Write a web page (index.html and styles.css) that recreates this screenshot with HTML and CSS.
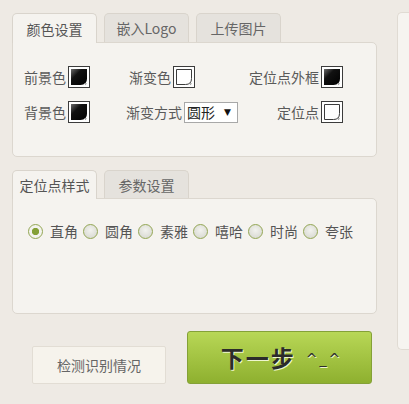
FILE: index.html
```html
<!DOCTYPE html>
<html lang="zh">
<head>
<meta charset="utf-8">
<link rel="stylesheet" href="styles.css">
</head>
<body>
<svg class="defs" width="0" height="0" aria-hidden="true">
  <defs>
    <linearGradient id="swg" x1="0" y1="0" x2="1" y2="1">
      <stop offset="0" stop-color="#6a6a6a"/>
      <stop offset="0.35" stop-color="#111"/>
      <stop offset="1" stop-color="#000"/>
    </linearGradient>
    <symbol id="sw-dark" viewBox="0 0 22 22">
      <rect x="0.5" y="0.5" width="21" height="21" fill="#fff" stroke="#3c3c3c"/>
      <path d="M3 3H19V12.5Q19 19 12.5 19H3Z" fill="url(#swg)"/>
      <path d="M16 17.2h3l-1.5 2z" fill="#9a9a9a"/>
    </symbol>
    <symbol id="sw-light" viewBox="0 0 22 22">
      <rect x="0.5" y="0.5" width="21" height="21" fill="#fff" stroke="#3c3c3c"/>
      <path d="M3.5 3.5H18.5V12.5Q18.5 18.5 12.5 18.5H3.5Z" fill="#fff" stroke="#3c3c3c"/>
      <path d="M16 17.2h3l-1.5 2z" fill="#9a9a9a"/>
    </symbol>
  </defs>
</svg>
<div class="page">
  <div class="main">
    <div class="tabs">
      <div class="tab active">颜色设置</div>
      <div class="tab">嵌入Logo</div>
      <div class="tab">上传图片</div>
    </div>
    <div class="panel panel-color">
      <div class="fields">
        <div class="field"><span>前景色</span><svg class="swatch"><use href="#sw-dark"/></svg></div>
        <div class="field shift"><span>渐变色</span><svg class="swatch"><use href="#sw-light"/></svg></div>
        <div class="field end"><span>定位点外框</span><svg class="swatch"><use href="#sw-dark"/></svg></div>
        <div class="field"><span>背景色</span><svg class="swatch"><use href="#sw-dark"/></svg></div>
        <div class="field"><span>渐变方式</span><div class="select"><span>圆形</span><span class="arrow">▼</span></div></div>
        <div class="field end"><span>定位点</span><svg class="swatch"><use href="#sw-light"/></svg></div>
      </div>
    </div>

    <div class="tabs tabs-second">
      <div class="tab active">定位点样式</div>
      <div class="tab">参数设置</div>
    </div>
    <div class="panel panel-style">
      <div class="radios">
        <label class="opt"><span class="radio checked"></span><span>直角</span></label>
        <label class="opt"><span class="radio"></span><span>圆角</span></label>
        <label class="opt"><span class="radio"></span><span>素雅</span></label>
        <label class="opt"><span class="radio"></span><span>嘻哈</span></label>
        <label class="opt"><span class="radio"></span><span>时尚</span></label>
        <label class="opt"><span class="radio"></span><span>夸张</span></label>
      </div>
    </div>

    <div class="actions">
      <div class="btn btn-check">检测识别情况</div>
      <div class="btn btn-next"><span class="big">下一步</span><span class="smile">^_^</span></div>
    </div>
  </div>
  <aside class="side"></aside>
</div>
</body>
</html>
```
FILE: styles.css
```css
html, body {
  margin: 0;
  padding: 0;
}
body {
  background: #eeeae4;
  font-family: "Noto Sans CJK SC", "Noto Sans", sans-serif;
  font-size: 14px;
  color: #5a5a5a;
  width: 409px;
  height: 404px;
  overflow: hidden;
}
.defs {
  position: absolute;
  width: 0;
  height: 0;
}
.page {
  display: flex;
  padding: 12px 0 0 12px;
  gap: 20px;
}
.main {
  width: 365px;
  flex: none;
  display: flex;
  flex-direction: column;
}
.tabs {
  display: flex;
  gap: 7px;
  margin-top: 1px;
  height: 29px;
  position: relative;
  z-index: 1;
}
.tabs-second {
  margin-top: 13px;
  height: 28px;
}
.tab {
  width: 85px;
  box-sizing: border-box;
  height: 29px;
  border: 1px solid #d9d4cc;
  border-bottom: none;
  border-radius: 5px 5px 0 0;
  background: #e5e2dd;
  color: #666;
  display: flex;
  align-items: center;
  justify-content: center;
  line-height: 1;
}
.tabs-second .tab {
  height: 28px;
}
.tab.active {
  background: #f5f3ef;
  color: #555;
  height: 30px;
}
.tabs-second .tab.active {
  height: 29px;
}
.panel {
  background: #f5f3ef;
  border: 1px solid #dcd7cf;
  border-radius: 0 5px 5px 5px;
  box-sizing: border-box;
}
.panel-color {
  height: 115px;
  padding: 23px 33px 0 11px;
}
.fields {
  display: grid;
  grid-template-columns: 102px 1fr auto;
  row-gap: 13px;
  align-items: center;
}
.field {
  display: flex;
  align-items: center;
  gap: 2px;
  line-height: 22px;
  height: 22px;
}
.field.shift {
  margin-left: 3px;
}
.field.end {
  justify-self: end;
}
.swatch {
  width: 22px;
  height: 22px;
  display: block;
}
.select {
  width: 54px;
  height: 21px;
  box-sizing: border-box;
  border: 1px solid #a8a8a8;
  background: #fff;
  color: #222;
  display: flex;
  align-items: center;
  justify-content: space-between;
  padding: 0 6px 0 2px;
  line-height: 19px;
}
.select .arrow {
  font-size: 9px;
  color: #111;
  font-family: "DejaVu Sans", sans-serif;
}
.panel-style {
  height: 116px;
  padding: 25px 0 0 15px;
}
.radios {
  display: flex;
  gap: 5px;
}
.opt {
  display: flex;
  align-items: center;
  gap: 7px;
  height: 15px;
  line-height: 15px;
  color: #555;
}
.radio {
  width: 15px;
  height: 15px;
  box-sizing: border-box;
  border-radius: 50%;
  border: 1.5px solid #93a653;
  background: radial-gradient(circle at 50% 40%, #f2f2ee 0, #dcddd6 70%);
  flex: none;
}
.radio.checked {
  background: radial-gradient(circle, #84a036 0, #84a036 3.3px, #f3f3ee 4px);
}
.actions {
  display: flex;
  align-items: flex-end;
  gap: 21px;
  padding-left: 20px;
  margin-top: 17px;
}
.btn {
  box-sizing: border-box;
  display: flex;
  align-items: center;
  justify-content: center;
}
.btn-check {
  width: 134px;
  height: 38px;
  background: #f6f3ec;
  border: 1px solid #e2ddd4;
  border-radius: 2px;
  color: #666;
}
.btn-next {
  width: 185px;
  height: 53px;
  background: linear-gradient(#b8d756, #8eb02f);
  border: 1px solid #84a137;
  border-radius: 3px;
  color: #2c2c2a;
  gap: 10px;
  padding-left: 4px;
}
.btn-next .big {
  font-size: 23px;
  font-weight: bold;
  letter-spacing: 2px;
  text-shadow: 1px 1px 0 #eef6cf;
  line-height: 1;
}
.btn-next .smile {
  font-size: 14px;
  font-family: "DejaVu Sans", sans-serif;
  letter-spacing: 2px;
  text-shadow: 1px 1px 0 #eef6cf;
  margin-top: 2px;
}
.side {
  flex: 1;
  min-width: 0;
  height: 338px;
  background: #f6f4f0;
  border: 1px solid #e0dbd3;
  border-right: none;
  border-radius: 5px 0 0 5px;
  box-sizing: border-box;
}
```
